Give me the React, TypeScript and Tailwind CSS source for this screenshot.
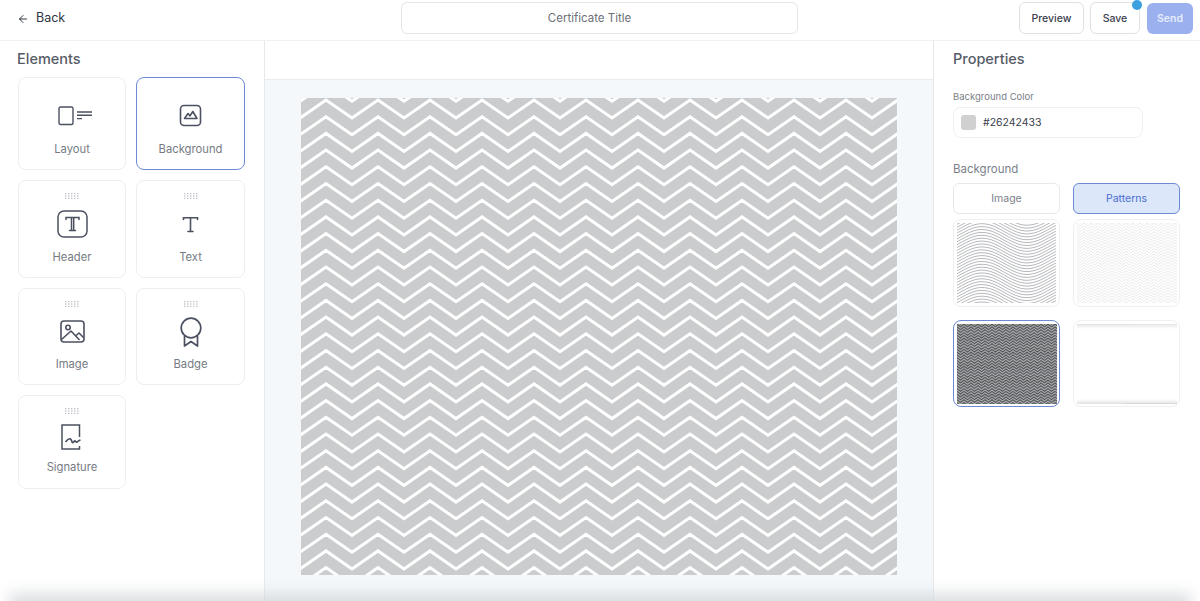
import { ReactNode } from "react"
import { ArrowLeft } from "lucide-react"

const ink = "#4b5160"

const GripDots = () => (
  <svg width="14" height="6" viewBox="0 0 14 6" fill="#bfc2c8">
    {[0, 1, 2].map((r) =>
      [0, 1, 2, 3, 4].map((c) => <rect key={`${r}-${c}`} x={c * 3} y={r * 2.4} width="1.4" height="1.3" />),
    )}
  </svg>
)

const LayoutIcon = () => (
  <svg className="ml-[8px]" width="36" height="20" viewBox="0 0 36 20" fill="none" stroke={ink} strokeWidth="1.4">
    <rect x="1" y="1" width="14" height="17.5" rx="1.5" />
    <path d="M19 6h15M19 9.300h15M19 12.600h5" />
  </svg>
)

const BackgroundIcon = () => (
  <svg width="23" height="23" viewBox="0 0 23 23" fill="none" stroke={ink} strokeWidth="1.6" strokeLinejoin="round">
    <rect x="1.500" y="1.500" width="20" height="20" rx="3.500" />
    <path d="M5.500 14.500 9 9.500l2 2.400L13.800 7.500 18 14.500z" />
  </svg>
)

const HeaderIcon = () => (
  <svg width="31" height="28" viewBox="0 0 31 28" fill="none" stroke={ink} strokeWidth="1.5" strokeLinecap="round">
    <rect x="1" y="1" width="29" height="26" rx="6" />
    <path d="M9 9.500V7.500h13v2M14.500 7.500v12.500M16.700 7.500v12.500M12.500 20.500h6" />
  </svg>
)

const TextIcon = () => (
  <svg width="17" height="17" viewBox="0 0 17 17" fill="none" stroke={ink} strokeWidth="1.6" strokeLinecap="round">
    <path d="M1.500 3.500V1.800h14v1.700M8.500 1.800v13.400M6 15.500h5" />
  </svg>
)

const ImageIcon = () => (
  <svg width="25" height="23" viewBox="0 0 25 23" fill="none" stroke={ink} strokeWidth="1.6" strokeLinejoin="round">
    <rect x="1" y="1" width="23" height="21" rx="3" />
    <circle cx="8" cy="7.500" r="2.200" />
    <path d="M1.500 19.500 11 11l8.500 9M16 15.500l3-2.500 4.500 4.500" />
  </svg>
)

const BadgeIcon = () => (
  <svg width="22" height="30" viewBox="0 0 22 30" fill="none" stroke={ink} strokeWidth="1.7" strokeLinejoin="round">
    <circle cx="11" cy="11" r="9.800" />
    <path d="M4.500 19v10l6.500-4.500 6.500 4.500V19" />
  </svg>
)

const SignatureIcon = () => (
  <svg width="22" height="26" viewBox="0 0 22 26" fill="none" stroke={ink} strokeWidth="1.500">
    <path d="M18.500 13V1H1v24h17.500v-3" />
    <path d="M4.500 18c2-2.500 3.500-4 5-3s1 4 2.500 3.500 1-2 2-1.500 1 1.500 2 1 1.500-1.500 3.500-2" strokeWidth="1.700" />
  </svg>
)

const chevron = (w: number, h: number, period: number, amp: number, gap: number, dx: number, dy: number) => {
  const lines: string[] = []
  for (let y = -amp - gap + dy; y < h + amp; y += gap) {
    let d = ""
    let up = true
    for (let x = dx - period; x < w + period; x += period / 2) {
      d += `${d ? "L" : "M"}${x} ${up ? y : y + amp}`
      up = !up
    }
    lines.push(d)
  }
  return lines
}

const CanvasPattern = () => (
  <svg className="block blur-[0.6px]" width="596" height="477" viewBox="0 0 596 477">
    <rect width="596" height="477" fill="#cbccce" />
    {chevron(596, 477, 52, 18, 16.7, 25, 3.300).map((d, i) => (
      <path key={i} d={d} fill="none" stroke="#fff" strokeWidth="3" />
    ))}
  </svg>
)

const waves = () => {
  const lines: string[] = []
  for (let i = -6; i < 36; i++) {
    let d = ""
    for (let x = 0; x <= 100; x += 3) {
      const y = i * 2.9 + 8 * Math.sin((2 * Math.PI * (x - 47.5)) / 90)
      d += `${d ? "L" : "M"}${x} ${y.toFixed(1)}`
    }
    lines.push(d)
  }
  return lines
}

const WaveThumb = () => (
  <svg className="block blur-[0.3px]" width="100" height="80" viewBox="0 0 100 80">
    {waves().map((d, i) => (
      <path key={i} d={d} fill="none" stroke="#aeb0b3" strokeWidth="0.9" />
    ))}
  </svg>
)

const ZigThumb = ({ color, width, bg }: { color: string; width: number; bg?: string }) => (
  <svg className="block blur-[0.3px]" width="100" height="80" viewBox="0 0 100 80">
    <rect width="100" height="80" fill={bg ?? "#fff"} />
    {chevron(100, 80, 7, 2.600, 2.800, 0, 0).map((d, i) => (
      <path key={i} d={d} fill="none" stroke={color} strokeWidth={width} />
    ))}
  </svg>
)

const StripThumb = () => (
  <div className="flex h-[80px] w-[100px] flex-col justify-between bg-white">
    <div className="h-[5px] bg-gradient-to-b from-[#e6e6e6] to-white">
      <div className="h-[1px] w-[54px] bg-[#e2e2e2]" />
    </div>
    <div className="flex h-[5px] justify-end bg-gradient-to-b from-white to-[#e2e2e2]">
      <div className="mt-[4px] h-[1px] w-[54px] bg-[#d9d9d9]" />
    </div>
  </div>
)

const Card = ({
  label,
  icon,
  active,
  grip = true,
  box = "h-[35px]",
}: {
  label: string
  icon: ReactNode
  active?: boolean
  grip?: boolean
  box?: string
}) => (
  <div
    className={`flex flex-col items-center rounded-lg border bg-white text-[11.250px] text-[#767b83] ${
      active ? "border-[#6d8ad4]" : "border-[#eceef1]"
    } ${grip ? "pt-[12px]" : "pt-[13px]"}`}
  >
    {grip && <GripDots />}
    <div className={`mt-[7px] flex w-full items-center justify-center ${box}`}>{icon}</div>
    <span className={`${grip ? "mt-[8px]" : "mt-[9px]"} leading-[14px]`}>{label}</span>
  </div>
)

const Thumb = ({ children, active }: { children: ReactNode; active?: boolean }) => (
  <div className={`flex items-center justify-center rounded-lg border bg-white ${active ? "border-[#6d8ad4]" : "border-[#eff0f2]"}`}>
    {children}
  </div>
)

export default function App() {
  return (
    <div
      className="relative flex h-[601px] w-full flex-col overflow-hidden bg-white text-[#374151]"
      style={{ fontFamily: "Inter, 'Liberation Sans', sans-serif" }}
    >
      <header className="flex h-[41px] shrink-0 items-center border-b border-[#eff1f3] pb-[4px] pl-[17px] pr-[7px]">
        <div className="flex w-[384px] items-center gap-[7px] pt-[1px] text-[12.500px] text-[#2f3542]">
          <ArrowLeft size={12} strokeWidth={2} />
          <span>Back</span>
        </div>
        <div className="flex h-[32px] w-[397px] items-center justify-center rounded-md border border-[#e3e5e8] pr-[20px] pt-[2px] text-[11.500px] text-[#6b7079]">
          Certificate Title
        </div>
        <div className="ml-auto flex items-center text-[10.500px] font-medium">
          <button className="h-[32px] w-[65px] rounded-md border border-[#dfe1e5] pt-[1px] text-[#3a404c]">Preview</button>
          <button className="relative ml-[6px] h-[32px] w-[50px] rounded-md border border-[#dfe1e5] pt-[1px] text-[#3a404c]">
            Save
            <span className="absolute -right-[3px] -top-[3px] h-[10px] w-[10px] rounded-full bg-[#3b9fe0]" />
          </button>
          <button className="ml-[7px] h-[31px] w-[46px] rounded-md bg-[#9bb0ee] pt-[1px] font-semibold text-[#e6ecfb]">Send</button>
        </div>
      </header>

      <div className="flex min-h-0 flex-1">
        <aside className="w-[265px] shrink-0 border-r border-[#e6e9ec] pl-[17px] pt-[9px]">
          <h2 className="text-[14.500px] font-medium leading-[18px] text-[#565b66]">Elements</h2>
          <div className="ml-[1px] mt-[9px] grid w-[227px] grid-cols-[108px_109px] grid-rows-[93px_98px_97px_94px] gap-[10px]">
            <Card label="Layout" icon={<LayoutIcon />} grip={false} />
            <Card label="Background" icon={<BackgroundIcon />} grip={false} active />
            <Card label="Header" icon={<HeaderIcon />} box="h-[36px]" />
            <Card label="Text" icon={<TextIcon />} box="h-[36px]" />
            <Card label="Image" icon={<ImageIcon />} />
            <Card label="Badge" icon={<BadgeIcon />} />
            <Card label="Signature" icon={<SignatureIcon />} box="h-[31px]" />
          </div>
        </aside>

        <main className="flex min-w-0 flex-1 flex-col">
          <div className="h-[39px] shrink-0 border-b border-[#e9ecef]" />
          <div className="flex-1 bg-[#f4f8fb] pl-[36px] pt-[18px]">
            <CanvasPattern />
          </div>
        </main>

        <aside className="w-[267px] shrink-0 border-l border-[#e6e9ec] pl-[19px] pr-[19px] pt-[9px]">
          <h2 className="text-[14.500px] font-medium leading-[18px] text-[#565b66]">Properties</h2>
          <p className="mt-[23px] text-[9.500px] leading-[12px] text-[#7b8088]">Background Color</p>
          <div className="mt-[4px] flex h-[31px] w-[190px] items-center gap-[7px] rounded-lg border border-[#eef0f2] pl-[7px] text-[10.500px] text-[#3a404c]">
            <span className="h-[15px] w-[15px] rounded-[3px] bg-[#d0d0d1]" />
            <span>#26242433</span>
          </div>
          <p className="mt-[24px] text-[11.500px] leading-[14px] text-[#7b8088]">Background</p>
          <div className="mt-[7px] grid grid-cols-[107px_107px] gap-x-[13px] text-[10.500px]">
            <button className="h-[31px] rounded-md border border-[#e6e8eb] text-[#7b8088]">Image</button>
            <button className="h-[31px] rounded-md border border-[#6d8ad4] bg-[#dce7fa] text-[#4a6fd0]">Patterns</button>
          </div>
          <div className="mt-[5px] grid grid-cols-[107px_107px] grid-rows-[88px_87px] gap-x-[13px] gap-y-[13px]">
            <Thumb>
              <WaveThumb />
            </Thumb>
            <Thumb>
              <ZigThumb color="#e0e1e2" width={0.7} />
            </Thumb>
            <Thumb active>
              <ZigThumb color="#55575b" width={1.1} bg="#a9aaac" />
            </Thumb>
            <Thumb>
              <StripThumb />
            </Thumb>
          </div>
        </aside>
      </div>

      {/* soft shadow along the bottom edge */}
      <div className="pointer-events-none absolute inset-x-[10px] -bottom-[10px] h-[16px] bg-[#d3d7db] blur-[8px]" />
    </div>
  )
}
